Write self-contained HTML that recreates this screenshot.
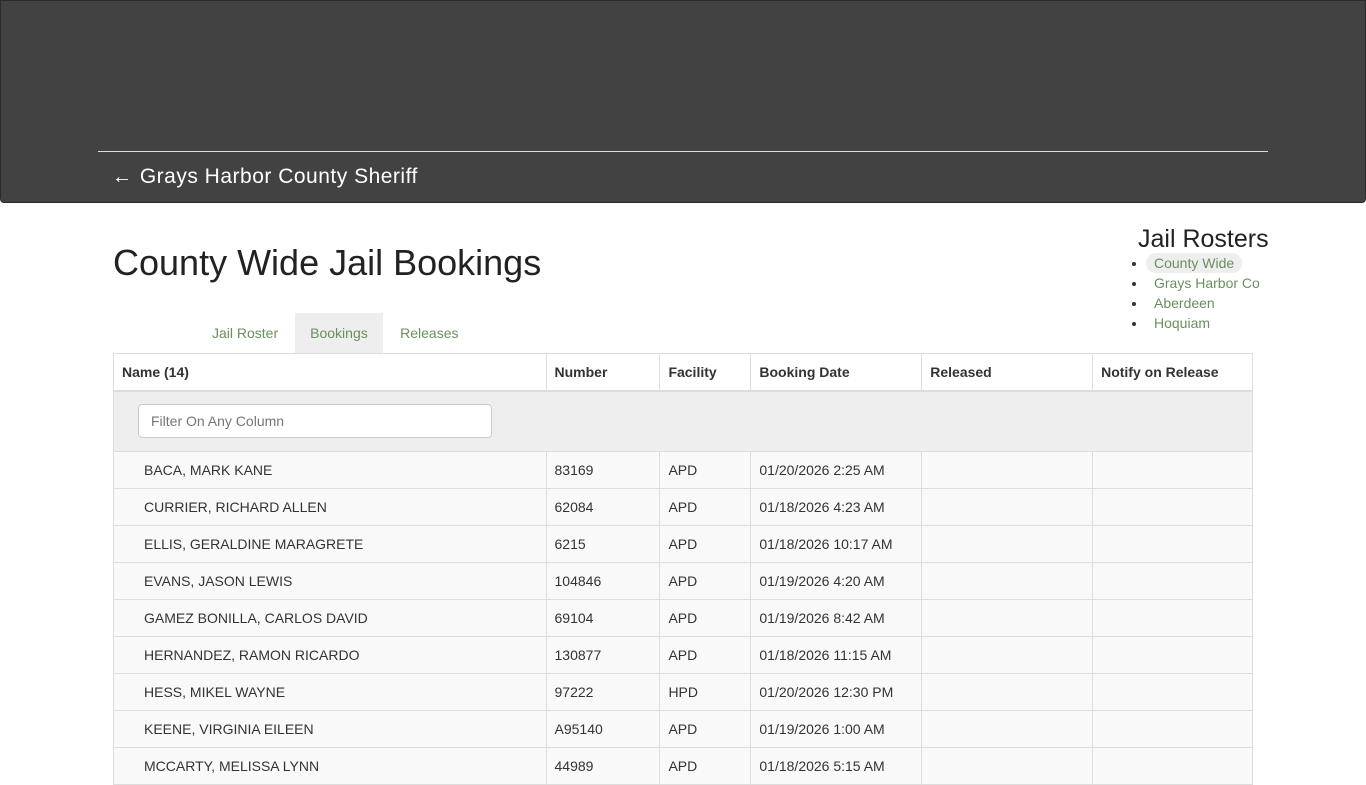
<!DOCTYPE html>
<html><head><meta charset="utf-8"><style>
*{box-sizing:border-box}
body{margin:0;font-family:"Liberation Sans",Arial,sans-serif;color:#333;background:#fff;width:1366px;height:768px;overflow:hidden;position:relative}
.hdr{position:absolute;left:0;top:0;width:1366px;height:203px;background:#424242;border:1px solid #2a2a2a;border-radius:0 0 4px 4px}
.hdr .line{position:absolute;left:97px;top:150px;width:1170px;height:1px;background:#ddd}
.hdr .t{position:absolute;left:111px;top:164px;color:#fff;font-size:21px;letter-spacing:.5px}
.hdr .t b{font-weight:normal;font-size:20px;margin-right:1px}
h1{position:absolute;left:113px;top:242px;margin:0;font-weight:normal;font-size:36px;color:#222}
.side{position:absolute;left:1138px;top:225px}
.side h3{margin:0;font-weight:normal;font-size:25px;color:#222}
.side ul{margin:-1px 0 0;padding:0;list-style:none}
.side li{position:relative;font-size:14px;height:20px;line-height:20px;padding-left:16px;color:#6a8f5f}
.side li:before{content:"";position:absolute;left:-6px;top:9px;width:4px;height:4px;border-radius:50%;background:#333}
.side li.a span{background:#eee;border-radius:10px;padding:2px 8px;margin-left:-8px}
.tabs{position:absolute;top:313px;left:197px;display:flex}
.tabs div{height:40px;line-height:40px;padding:0 15px;font-size:14px;color:#6a8f5f}
.tabs div:first-child{padding-right:17px}
.tabs .a{background:#eee;width:88px}
.tabs div:last-child{padding-left:17px}
table{position:absolute;left:113px;top:353px;width:1140px;border-collapse:collapse;font-size:14px}
td,th{border:1px solid #ddd;padding:0 8px;text-align:left;height:37px}
th{font-weight:bold;border-bottom:2px solid #ddd}
tr.f td{background:#eee;height:61px;padding-left:24px}
tr.f input{width:354px;height:34px;border:1px solid #ccc;border-radius:4px;font-family:inherit;font-size:14px;padding:0 12px;color:#555}
tbody tr td{background:#f9f9f9}
tbody tr td:first-child{padding-left:30px}
</style></head><body>
<div class="hdr"><div class="line"></div><div class="t"><b>←</b> Grays Harbor County Sheriff</div></div>
<h1>County Wide Jail Bookings</h1>
<div class="side"><h3>Jail Rosters</h3><ul>
<li class="a"><span>County Wide</span></li><li>Grays Harbor Co</li><li>Aberdeen</li><li>Hoquiam</li></ul></div>
<div class="tabs"><div>Jail Roster</div><div class="a">Bookings</div><div>Releases</div></div>
<table>
<colgroup><col style="width:433px"><col style="width:114px"><col style="width:91px"><col style="width:171px"><col style="width:171px"><col style="width:160px"></colgroup>
<thead><tr><th>Name (14)</th><th>Number</th><th>Facility</th><th>Booking Date</th><th>Released</th><th>Notify on Release</th></tr>
<tr class="f"><td colspan="6"><input placeholder="Filter On Any Column"></td></tr></thead>
<tbody>
<tr><td>BACA, MARK KANE</td><td>83169</td><td>APD</td><td>01/20/2026 2:25 AM</td><td></td><td></td></tr>
<tr><td>CURRIER, RICHARD ALLEN</td><td>62084</td><td>APD</td><td>01/18/2026 4:23 AM</td><td></td><td></td></tr>
<tr><td>ELLIS, GERALDINE MARAGRETE</td><td>6215</td><td>APD</td><td>01/18/2026 10:17 AM</td><td></td><td></td></tr>
<tr><td>EVANS, JASON LEWIS</td><td>104846</td><td>APD</td><td>01/19/2026 4:20 AM</td><td></td><td></td></tr>
<tr><td>GAMEZ BONILLA, CARLOS DAVID</td><td>69104</td><td>APD</td><td>01/19/2026 8:42 AM</td><td></td><td></td></tr>
<tr><td>HERNANDEZ, RAMON RICARDO</td><td>130877</td><td>APD</td><td>01/18/2026 11:15 AM</td><td></td><td></td></tr>
<tr><td>HESS, MIKEL WAYNE</td><td>97222</td><td>HPD</td><td>01/20/2026 12:30 PM</td><td></td><td></td></tr>
<tr><td>KEENE, VIRGINIA EILEEN</td><td>A95140</td><td>APD</td><td>01/19/2026 1:00 AM</td><td></td><td></td></tr>
<tr><td>MCCARTY, MELISSA LYNN</td><td>44989</td><td>APD</td><td>01/18/2026 5:15 AM</td><td></td><td></td></tr>
</tbody></table>
</body></html>
